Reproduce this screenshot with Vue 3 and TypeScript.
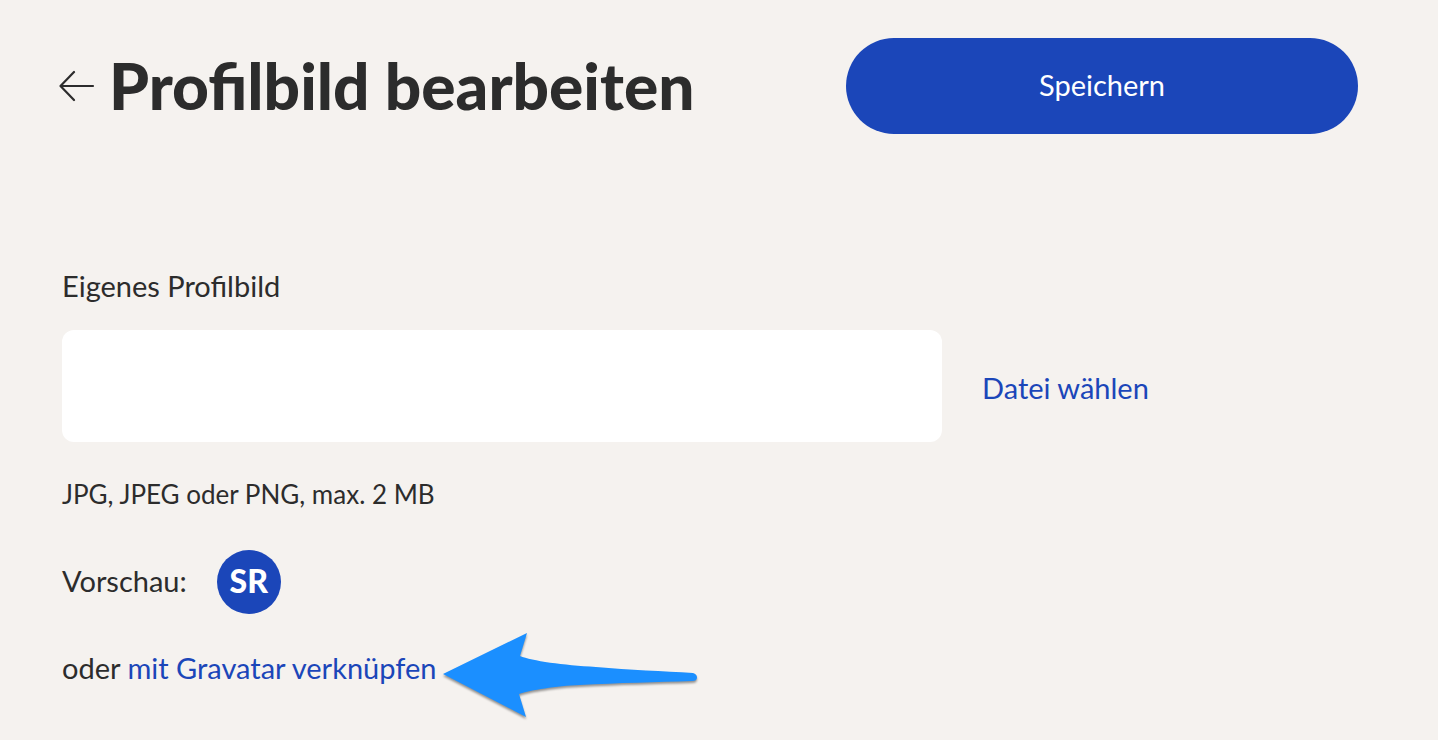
<script setup lang="ts">
import { ref } from 'vue'

const fileName = ref('')
const initials = 'SR'
</script>

<template>
  <form class="page" @submit.prevent>
    <header class="header">
      <a class="back" href="#" aria-label="Zurück">
        <svg width="36" height="32" viewBox="0 0 36 32" fill="none" aria-hidden="true">
          <path d="M34 16H1.5M15 2L1.5 16L15 30" stroke="currentColor" stroke-width="2.2" stroke-linecap="round" stroke-linejoin="round" />
        </svg>
      </a>
      <h1 class="title">Profilbild bearbeiten</h1>
      <button class="save" type="submit">Speichern</button>
    </header>

    <main class="content">
      <label class="label" for="picture">Eigenes Profilbild</label>
      <div class="file-row">
        <input id="picture" v-model="fileName" class="field" type="text" readonly aria-describedby="hint" />
        <button class="choose" type="button">Datei wählen</button>
      </div>
      <p id="hint" class="hint">JPG, JPEG oder PNG, max. 2 MB</p>
      <div class="preview">
        <span class="preview-label">Vorschau:</span>
        <span class="avatar">{{ initials }}</span>
      </div>
      <p class="gravatar">
        oder <a href="#">mit Gravatar verknüpfen</a>
        <svg class="pointer" width="264" height="96" viewBox="0 0 264 96" aria-hidden="true">
          <path d="M5 46L89 5L82 28C94 33 125 37 158 39C192 42 225 43 255 45Q259 46 259 49.5Q259 53 254 53C220 54 180 55 142 57C118 58 93 62 81 66L88 89Z" />
        </svg>
      </p>
    </main>
  </form>
</template>

<style>
body {
  margin: 0;
  background: #f5f2ef;
}
</style>

<style scoped>
.page {
  box-sizing: border-box;
  min-height: 100vh;
  padding: 38px 80px 48px 62px;
  background: #f5f2ef;
  color: #2c2c2c;
  font-family: Lato, "Open Sans", sans-serif;
  font-size: 29px;
  line-height: 40px;
}

.header {
  display: flex;
  align-items: center;
}

.back {
  display: flex;
  margin-left: -3px;
  color: inherit;
}

.title {
  flex: 1;
  margin: 0 0 0 14px;
  font-size: 64px;
  line-height: 80px;
  font-weight: 900;
  white-space: nowrap;
}

.save {
  flex: 0 0 40%;
  max-width: 512px;
  height: 96px;
  padding: 0 0 2px;
  border: 0;
  border-radius: 48px;
  background: #1b46b9;
  color: #fff;
  font: inherit;
  cursor: pointer;
}

.content {
  margin-top: 132px;
}

.label {
  display: block;
}

.file-row {
  display: flex;
  align-items: center;
  gap: 40px;
  margin-top: 24px;
}

.field {
  box-sizing: border-box;
  flex: 0 1 880px;
  min-width: 0;
  height: 112px;
  padding: 0 32px;
  border: 0;
  border-radius: 12px;
  background: #fff;
  color: inherit;
  font: inherit;
}

.choose {
  padding: 4px 0 0;
  border: 0;
  background: none;
  color: #1b46b9;
  font: inherit;
  white-space: nowrap;
  cursor: pointer;
}

.hint {
  margin: 32px 0 0;
  font-size: 26px;
}

.preview {
  display: flex;
  align-items: center;
  gap: 30px;
  margin-top: 36px;
}

.preview-label {
  padding-bottom: 2px;
}

.avatar {
  box-sizing: border-box;
  display: flex;
  align-items: center;
  justify-content: center;
  width: 64px;
  height: 64px;
  padding-bottom: 2px;
  border-radius: 50%;
  background: #1b46b9;
  color: #fff;
  font-size: 32px;
  font-weight: 900;
}

.gravatar {
  position: relative;
  width: fit-content;
  margin: 34px 0 0;
  white-space: nowrap;
}

.gravatar a {
  color: #1b46b9;
  text-decoration: none;
}

.pointer {
  position: absolute;
  top: -20px;
  left: 100%;
  margin-left: 2px;
  fill: #1b8fff;
  filter: drop-shadow(0 2px 1px rgba(0, 0, 0, 0.4));
}
</style>
